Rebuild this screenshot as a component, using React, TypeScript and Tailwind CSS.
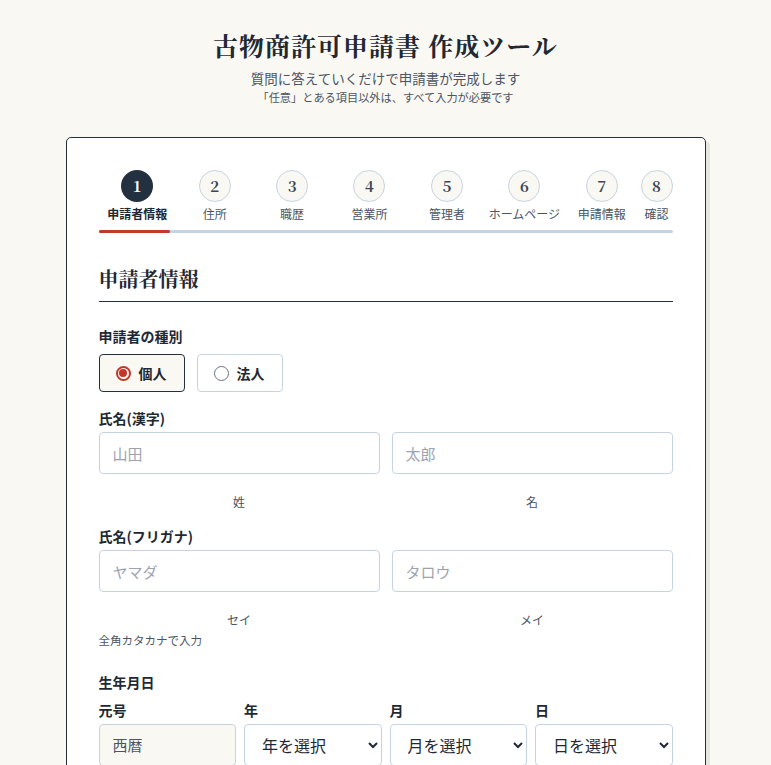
import React, { useState } from "react"

const serif = "font-['Noto_Serif_CJK_JP','Liberation_Serif','Noto_Sans_CJK_JP',serif]"

const steps = ["申請者情報", "住所", "職歴", "営業所", "管理者", "ホームページ", "申請情報", "確認"]

const Stepper = () => {
  const current = 0
  return (
    <div>
      <div className="grid grid-cols-[repeat(7,minmax(0,1fr))_auto]">
        {steps.map((s, i) => (
          <div key={s} className="flex flex-col items-center">
            <div
              className={`w-8 h-8 rounded-full flex items-center justify-center text-[15px] font-bold ${serif} ${
                i === current
                  ? "bg-[#223040] text-white"
                  : "bg-[#faf8f3] text-[#3d4654] border border-[#c6d4e1]"
              }`}
            >
              {i + 1}
            </div>
            <span
              className={`mt-[3px] text-[12px] leading-[18px] whitespace-nowrap ${
                i === current ? "text-[#1f2933] font-bold" : "text-[#4b5563]"
              }`}
            >
              {s}
            </span>
          </div>
        ))}
      </div>
      <div className="mt-[7px] h-[3px] bg-[#c6d4e1] rounded-full">
        <div className="h-full w-[12.5%] bg-[#c0392b] rounded-full" />
      </div>
    </div>
  )
}

const TextInput = ({ placeholder }: { placeholder: string }) => (
  <input
    placeholder={placeholder}
    className="w-full h-[42px] rounded-[4px] border border-[#c6d4e1] bg-white px-[13px] text-[15px] text-[#1f2933] placeholder:text-[#9ca3af] outline-none"
  />
)

const NamePair = ({
  label,
  a,
  b,
  subA,
  subB,
  note,
}: {
  label: string
  a: string
  b: string
  subA: string
  subB: string
  note?: string
}) => (
  <div className="mt-4">
    <div className="text-[14px] leading-5 font-bold text-[#1f2933]">{label}</div>
    <div className="mt-1 grid grid-cols-2 gap-3">
      <div>
        <TextInput placeholder={a} />
        <div className="mt-5 text-center text-[12px] leading-4 text-[#4b5563]">{subA}</div>
      </div>
      <div>
        <TextInput placeholder={b} />
        <div className="mt-5 text-center text-[12px] leading-4 text-[#4b5563]">{subB}</div>
      </div>
    </div>
    {note && <div className="mt-1 text-[11.5px] leading-4 text-[#4b5563]">{note}</div>}
  </div>
)

const Radio = ({ label, checked, onClick }: { label: string; checked: boolean; onClick: () => void }) => (
  <button
    onClick={onClick}
    className={`h-[38px] w-[86px] flex items-center gap-2 px-4 rounded-[4px] border ${
      checked ? "border-[#223040] bg-[#faf8f3]" : "border-[#c6d4e1] bg-white"
    }`}
  >
    <span
      className={`w-[15px] h-[15px] rounded-full flex items-center justify-center ${
        checked ? "border-2 border-[#c0392b]" : "border-[1.5px] border-[#6b7280]"
      }`}
    >
      {checked && <span className="w-[8px] h-[8px] rounded-full bg-[#c0392b]" />}
    </span>
    <span className="text-[14px] font-bold text-[#1f2933]">{label}</span>
  </button>
)

const SelectBox = ({ label, value }: { label: string; value: string }) => (
  <div>
    <div className="text-[14px] leading-5 font-bold text-[#1f2933]">{label}</div>
    <select className="mt-1 w-full h-[42px] rounded-[4px] border border-[#c6d4e1] bg-white pl-[13px] pr-1 text-[16px] text-[#1f2933] outline-none">
      <option>{value}</option>
    </select>
  </div>
)

export default function App() {
  const [kind, setKind] = useState("個人")

  return (
    <div className="min-h-screen bg-[#faf8f3] font-['Noto_Sans_CJK_JP','Noto_Sans',sans-serif] text-[#1f2933]">
      <header className="pt-[28px] text-center">
        <h1 className={`text-[25px] leading-[34px] font-bold tracking-[0.04em] text-[#1f2933] ${serif}`}>
          古物商許可申請書 作成ツール
        </h1>
        <p className="mt-[6px] text-[13.5px] leading-5 text-[#4b5563]">質問に答えていくだけで申請書が完成します</p>
        <p className="mt-px text-[11.2px] leading-4 text-[#4b5563]">「任意」とある項目以外は、すべて入力が必要です</p>
      </header>

      <main className="mt-[32px] mx-auto w-[640px] bg-white border border-[#223040] rounded-[5px] shadow-[4px_4px_0_#e8e6df] px-8 pt-8 pb-8">
        <Stepper />

        <h2 className={`mt-8 pb-2 border-b border-[#223040] text-[20px] leading-7 font-bold ${serif}`}>申請者情報</h2>

        <div className="mt-6">
          <div className="text-[14px] leading-5 font-bold">申請者の種別</div>
          <div className="mt-2 flex gap-3">
            {["個人", "法人"].map((k) => (
              <Radio key={k} label={k} checked={kind === k} onClick={() => setKind(k)} />
            ))}
          </div>
        </div>

        <NamePair label="氏名(漢字)" a="山田" b="太郎" subA="姓" subB="名" />
        <NamePair label="氏名(フリガナ)" a="ヤマダ" b="タロウ" subA="セイ" subB="メイ" note="全角カタカナで入力" />

        <div className="mt-6">
          <div className="text-[14px] leading-5 font-bold">生年月日</div>
          <div className="mt-2 grid grid-cols-4 gap-2">
            <div>
              <div className="text-[14px] leading-5 font-bold">元号</div>
              <div className="mt-1 h-[42px] rounded-[4px] border border-[#c6d4e1] bg-[#faf8f3] px-[13px] flex items-center text-[15px] text-[#4b5563]">
                西暦
              </div>
            </div>
            <SelectBox label="年" value="年を選択" />
            <SelectBox label="月" value="月を選択" />
            <SelectBox label="日" value="日を選択" />
          </div>
        </div>
      </main>
    </div>
  )
}
